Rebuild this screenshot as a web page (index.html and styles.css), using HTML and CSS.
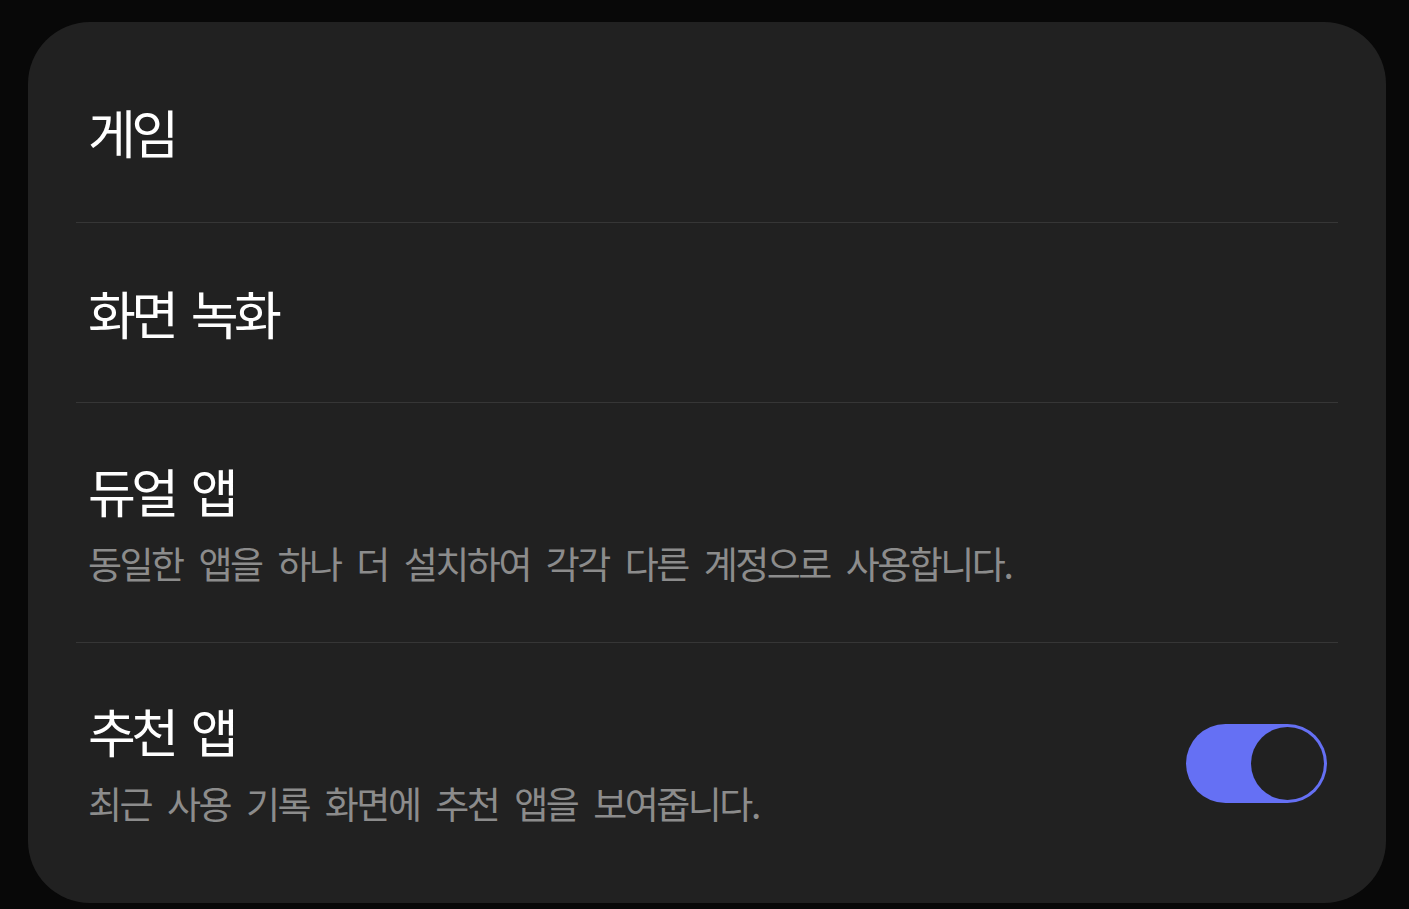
FILE: index.html
```html
<!DOCTYPE html>
<html lang="ko">
<head>
    <meta charset="UTF-8">
    <meta name="viewport" content="width=device-width, initial-scale=1.0">
    <title>설정</title>
    <link rel="stylesheet" href="styles.css">
</head>
<body>
    <div class="card">
        <div class="row row-first">
            <div class="text">
                <div class="title">게임</div>
            </div>
        </div>
        <div class="row">
            <div class="text">
                <div class="title">화면 녹화</div>
            </div>
        </div>
        <div class="row row-sub">
            <div class="text">
                <div class="title">듀얼 앱</div>
                <div class="subtitle">동일한 앱을 하나 더 설치하여 각각 다른 계정으로 사용합니다.</div>
            </div>
        </div>
        <div class="row row-sub">
            <div class="text">
                <div class="title">추천 앱</div>
                <div class="subtitle">최근 사용 기록 화면에 추천 앱을 보여줍니다.</div>
            </div>
            <!-- 스위치 -->
            <div class="switch on">
                <div class="knob"></div>
            </div>
        </div>
    </div>
</body>
</html>
```

FILE: styles.css
```css
body {
    margin: 0;
    padding: 22px 23px 0 28px;
    background-color: #080808;
    font-family: "Noto Sans CJK KR", "Noto Sans", sans-serif;
    overflow: hidden;
}
.card {
    background-color: #212121;
    border-radius: 62px;
    padding: 20px 48px;
    height: 841px;
}
.row {
    box-sizing: border-box;
    display: flex;
    align-items: center;
    justify-content: space-between;
    height: 180px;
    border-bottom: 1px solid #363636;
    padding: 0 11px 0 12px;
}
.row-first {
    height: 181px;
}
.row:last-child {
    border-bottom: none;
}
.row-sub {
    height: 240px;
}
.title {
    color: #ffffff;
    font-size: 52px;
    letter-spacing: -4.5px;
    word-spacing: 6px;
    line-height: 60px;
}
.subtitle {
    color: #8c8c8c;
    font-size: 37px;
    letter-spacing: -2.5px;
    word-spacing: 8px;
    line-height: 44px;
    margin-top: 20px;
}
.switch {
    position: relative;
    width: 141px;
    height: 79px;
    border-radius: 40px;
    background-color: #3a3a3a;
}
.switch.on {
    background-color: #6570f4;
}
.knob {
    position: absolute;
    top: 3px;
    right: 3px;
    width: 73px;
    height: 73px;
    border-radius: 50%;
    background-color: #212121;
}
```
